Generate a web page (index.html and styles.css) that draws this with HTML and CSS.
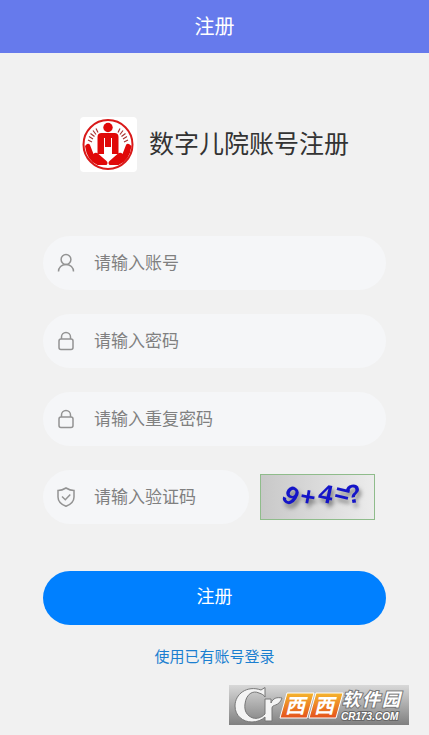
FILE: index.html
```html
<!DOCTYPE html>
<html lang="zh-CN">
  <head>
    <meta charset="UTF-8" />
    <meta name="viewport" content="width=device-width, initial-scale=1.0" />
    <title>注册</title>
    <link rel="stylesheet" href="styles.css">
  </head>
  <body>
    <header class="navbar">注册</header>

    <main class="register">
      <div class="brand">
        <svg class="brand-logo" viewBox="0 0 57 55" aria-hidden="true">
          <rect width="57" height="55" rx="4" fill="#fff" />
          <circle cx="28" cy="27.500" r="24.500" fill="none" stroke="#d91a1a" stroke-width="2" />
          <g fill="#e00808">
            <circle cx="28" cy="10.500" r="4.700" />
            <path d="M17.500 37V20q0-4 4-4h13q4 0 4 4v17h-6.500V21h-1v9h-6v-9h-1v16z" />
            <path d="M7 27q2-1 3 1l3.500 9 1-1q2-1 4 1l8 7q2 2 0 4h-9Q7 44 5 29z" />
            <path d="M49 27q-2-1-3 1l-3.500 9-1-1q-2-1-4 1l-8 7q-2 2 0 4h9q11-4 13-19z" />
          </g>
          <path
            d="M8 23l4 2M9 19.500l4 2.500M10.500 16.500l4 3M13 13.500l3 4M16 11.500l2 4M48 23l-4 2M47 19.500l-4 2.500M45.500 16.500l-4 3M43 13.500l-3 4M40 11.500l-2 4"
            stroke="#a83232" stroke-width="1.200"
          />
        </svg>
        <h1>数字儿院账号注册</h1>
      </div>

      <form class="register-form">
        <div class="field">
          <label for="account" aria-label="账号">
            <svg class="icon" viewBox="0 0 20 20">
              <circle cx="10" cy="6.500" r="4.900" />
              <path d="M2.500 18.500c0-4 3-7.100 7.500-7.100s7.500 3.100 7.500 7.100" />
            </svg>
          </label>
          <input type="text" id="account" placeholder="请输入账号" />
        </div>

        <div class="field">
          <label for="password" aria-label="密码">
            <svg class="icon" viewBox="0 0 20 20">
              <rect x="3" y="8" width="14" height="10.500" rx="2" />
              <path d="M5.500 8V6a4.500 4.500 0 0 1 9 0v2" />
            </svg>
          </label>
          <input type="password" id="password" placeholder="请输入密码" />
        </div>

        <div class="field">
          <label for="repeatPassword" aria-label="重复密码">
            <svg class="icon" viewBox="0 0 20 20">
              <rect x="3" y="8" width="14" height="10.500" rx="2" />
              <path d="M5.500 8V6a4.500 4.500 0 0 1 9 0v2" />
            </svg>
          </label>
          <input type="password" id="repeatPassword" placeholder="请输入重复密码" />
        </div>

        <div class="code-row">
          <div class="field">
            <label for="code" aria-label="验证码">
              <svg class="icon" viewBox="0 0 20 20">
                <path d="M10 1q4 2.500 8 2.500V10c0 4.500-3.500 7.500-8 9.300C5.500 17.500 2 14.500 2 10V3.500q4 0 8-2.500z" />
                <path d="M6 9.500l3.300 3.200 5-5.200" />
              </svg>
            </label>
            <input type="text" id="code" placeholder="请输入验证码" />
          </div>
          <svg class="captcha" viewBox="0 0 115 46" role="img">
            <defs>
              <linearGradient id="captchaBg">
                <stop offset="0" stop-color="#c8c8c8" />
                <stop offset="1" stop-color="#ececec" />
              </linearGradient>
            </defs>
            <rect x="0.500" y="0.500" width="114" height="45" fill="url(#captchaBg)" stroke="#8fbc8b" />
            <text class="captcha-text" x="20 39 57 73 87" y="25 30 27 26 30" rotate="34 10 12 14 -10">9+4=?</text>
          </svg>
        </div>

        <button type="submit" class="submit">注册</button>
      </form>

      <a class="login-link" href="#login">使用已有账号登录</a>
    </main>

    <svg class="watermark" viewBox="0 0 180 40">
      <defs>
        <linearGradient id="markBg" x2="0" y2="1">
          <stop offset="0" stop-color="#d8d8d8" />
          <stop offset="1" stop-color="#808080" />
        </linearGradient>
        <linearGradient id="markOrange" x2="0" y2="1">
          <stop offset="0" stop-color="#f5b52e" />
          <stop offset="1" stop-color="#e4511c" />
        </linearGradient>
      </defs>
      <rect width="180" height="40" fill="url(#markBg)" />
      <path
        d="M36 12V2.500L32 5C18 0 6 9 6 21c0 10 8 16 17 16 5 0 10-2 13-5v4h7V23c0-4 7-1 10-10-5-1-9 0-11 5v-4h-6v15c-4 4-8 5-12 4-6-2-9-7-8-14 1-10 8-14 14-11 3 1 5 2 6 4z"
        fill="#f4f4f4" stroke="#777" stroke-width="1"
      />
      <path d="M58 8h27l-7 25H51zM87 8h27l-7 25H80z" fill="url(#markOrange)" stroke="#fff" stroke-width="1" />
      <text class="mark-west" x="56 85" y="28">西西</text>
      <text class="mark-name" x="113 133 153" y="21">软件园</text>
      <text class="mark-site" x="112" y="35">CR173.COM</text>
    </svg>
  </body>
</html>
```
FILE: styles.css
```css
* {
  margin: 0;
  padding: 0;
  box-sizing: border-box;
}

body {
  position: relative;
  min-height: 100vh;
  background-color: #f1f1f1;
  color: #333;
  font-family: "Noto Sans CJK SC", sans-serif;
}

.navbar {
  height: 53px;
  background-color: #667aec;
  color: #fff;
  font-size: 20px;
  line-height: 52px;
  text-align: center;
}

.register {
  padding: 63px 10% 64px;
  text-align: center;
}

.brand {
  display: flex;
  justify-content: center;
  align-items: center;
  gap: 12px;
  margin-bottom: 64px;
}

.brand-logo {
  width: 57px;
  height: 55px;
}

.brand h1 {
  font-size: 25px;
  font-weight: 400;
  line-height: 52px;
  padding-bottom: 4px;
}

.register-form {
  display: flex;
  flex-direction: column;
  gap: 24px;
}

.field {
  display: flex;
  align-items: center;
  height: 54px;
  padding-left: 13px;
  border-radius: 27px;
  background-color: #f5f6f8;
}

.field label {
  display: flex;
}

.icon {
  width: 20px;
  height: 20px;
  fill: none;
  stroke: #939393;
  stroke-width: 1.5;
}

.field input {
  flex: 1;
  min-width: 0;
  height: 54px;
  padding: 0 12px 4px 18px;
  border: none;
  outline: none;
  background: none;
  color: #333;
  font-family: inherit;
  font-size: 17px;
}

.field input::placeholder {
  color: #808080;
}

.code-row {
  display: flex;
  align-items: center;
  gap: 11px;
}

.code-row .field {
  width: 60%;
}

.captcha {
  width: 115px;
  height: 46px;
}

.captcha-text {
  fill: #1414c8;
  font-family: "Liberation Sans", sans-serif;
  font-size: 26px;
  font-weight: 700;
  filter: drop-shadow(2px 4px 2px #777);
}

.submit {
  height: 54px;
  margin-top: 23px;
  padding-bottom: 6px;
  border: none;
  border-radius: 27px;
  background-color: #0080ff;
  color: #fff;
  font-family: inherit;
  font-size: 18px;
  cursor: pointer;
}

.login-link {
  display: inline-block;
  margin-top: 19px;
  color: #1b7fd0;
  font-size: 15px;
  line-height: 24px;
  text-decoration: none;
}

.watermark {
  position: absolute;
  right: 20px;
  bottom: 10px;
  width: 180px;
  height: 40px;
}

.mark-west {
  fill: #fff;
  font-size: 20px;
  font-style: italic;
  font-weight: 700;
}

.mark-name {
  fill: #fff;
  stroke: #777;
  stroke-width: 2px;
  paint-order: stroke;
  font-size: 18px;
  font-style: italic;
  font-weight: 700;
}

.mark-site {
  fill: #fff;
  stroke: #666;
  stroke-width: 2px;
  paint-order: stroke;
  font-family: "Liberation Sans", sans-serif;
  font-size: 10px;
  font-style: italic;
  font-weight: 700;
}
```
